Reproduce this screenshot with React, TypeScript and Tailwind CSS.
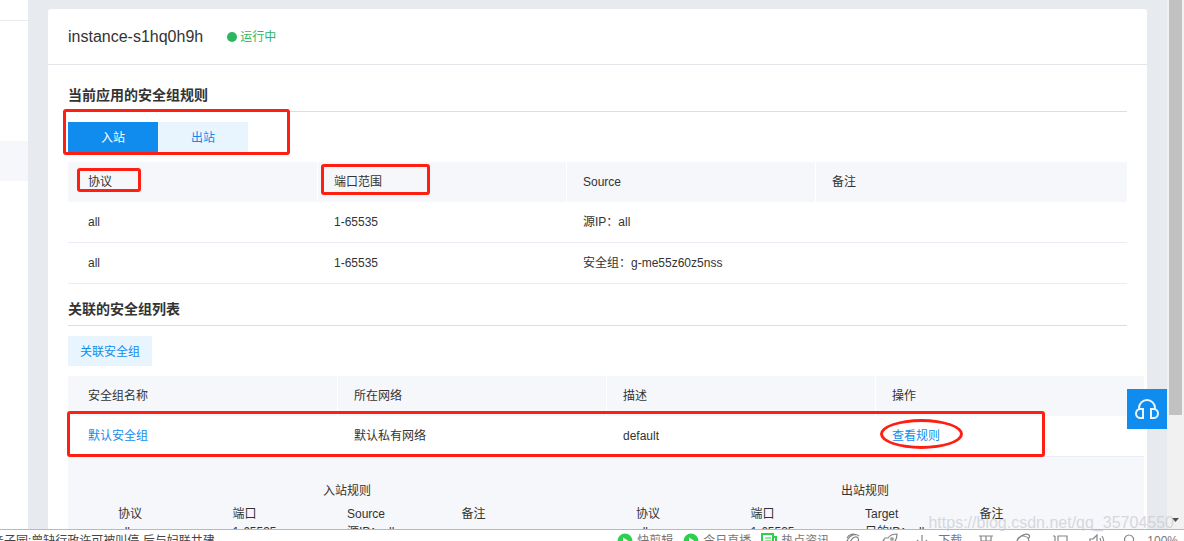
import React from "react";

interface Rule {
  protocol: string;
  port: string;
  peer: string;
  remark: string;
}

const inboundRules: Rule[] = [
  { protocol: "all", port: "1-65535", peer: "源IP：all", remark: "" },
  { protocol: "all", port: "1-65535", peer: "安全组：g-me55z60z5nss", remark: "" },
];

const outboundRules: Rule[] = [
  { protocol: "all", port: "1-65535", peer: "目的IP：all", remark: "" },
];

const SectionTitle: React.FC<{ children: React.ReactNode }> = ({ children }) => (
  <h2 className="flex h-8 items-center border-b border-[#dcdde0] pb-0.5 text-sm font-bold text-[#333]">
    {children}
  </h2>
);

// Applied rules table with the inbound / outbound switch
const AppliedRules = () => (
  <section>
    <SectionTitle>当前应用的安全组规则</SectionTitle>
    <div className="mt-[10px] flex">
      <button type="button" className="h-[30px] w-[90px] bg-[#108cee] pt-0.5 text-white">
        入站
      </button>
      <button type="button" className="h-[30px] w-[90px] bg-[#e8f5fe] pt-0.5 text-[#108cee]">
        出站
      </button>
    </div>
    <table className="mt-[10px] w-full table-fixed border-separate border-spacing-0 text-left">
      <thead>
        <tr className="h-10 bg-[#f5f7fb]">
          <th className="w-[250px] border-r border-white p-0 pl-5 font-normal">协议</th>
          <th className="w-[249px] border-r border-white p-0 pl-4 font-normal">端口范围</th>
          <th className="w-[249px] border-r border-white p-0 pl-4 font-normal">Source</th>
          <th className="p-0 pl-4 font-normal">备注</th>
        </tr>
      </thead>
      <tbody>
        {inboundRules.map((rule) => (
          <tr key={rule.peer} className="h-[41px]">
            <td className="border-b border-[#eaebf5] p-0 pl-5">{rule.protocol}</td>
            <td className="border-b border-[#eaebf5] p-0 pl-4">{rule.port}</td>
            <td className="border-b border-[#eaebf5] p-0 pl-4">{rule.peer}</td>
            <td className="border-b border-[#eaebf5] p-0 pl-4">{rule.remark}</td>
          </tr>
        ))}
      </tbody>
    </table>
  </section>
);

interface RuleDetailProps {
  title: string;
  peerLabel: string;
  rules: Rule[];
}

const RuleDetail: React.FC<RuleDetailProps> = ({ title, peerLabel, rules }) => (
  <div className="flex-1">
    <h3 className="mb-1 h-[18px] text-center">{title}</h3>
    <table className="ml-[30px] w-[458px] table-fixed text-left">
      <thead>
        <tr className="h-[18px]">
          <th className="p-0 font-normal">协议</th>
          <th className="p-0 font-normal">端口</th>
          <th className="p-0 font-normal">{peerLabel}</th>
          <th className="p-0 font-normal">备注</th>
        </tr>
      </thead>
      <tbody>
        {rules.map((rule) => (
          <tr key={rule.peer} className="h-[18px]">
            <td className="p-0">{rule.protocol}</td>
            <td className="p-0">{rule.port}</td>
            <td className="whitespace-nowrap p-0">{rule.peer}</td>
            <td className="p-0">{rule.remark}</td>
          </tr>
        ))}
      </tbody>
    </table>
  </div>
);

// Groups bound to the instance, first row expanded
const GroupList = () => (
  <section className="mt-[10px]">
    <SectionTitle>关联的安全组列表</SectionTitle>
    <button type="button" className="mt-[10px] block h-[30px] bg-[#e8f5fe] px-3 pt-0.5 text-[#108cee]">
      关联安全组
    </button>
    <div className="-mr-[17px] mt-[10px]">
      <table className="w-full table-fixed border-separate border-spacing-0 text-left">
        <thead>
          <tr className="h-10 bg-[#f5f7fb]">
            <th className="w-[270px] border-r border-white p-0 pl-5 font-normal">安全组名称</th>
            <th className="w-[269px] border-r border-white p-0 pl-4 font-normal">所在网络</th>
            <th className="w-[269px] border-r border-white p-0 pl-4 font-normal">描述</th>
            <th className="p-0 pl-4 font-normal">操作</th>
          </tr>
        </thead>
        <tbody>
          <tr className="h-[41px]">
            <td className="border-b border-[#eaebf5] p-0 pl-5">
              <a href="#group" className="text-[#108cee]">默认安全组</a>
            </td>
            <td className="border-b border-[#eaebf5] p-0 pl-4">默认私有网络</td>
            <td className="border-b border-[#eaebf5] p-0 pl-4">default</td>
            <td className="border-b border-[#eaebf5] p-0 pl-4">
              <a href="#rules" className="text-[#108cee]">查看规则</a>
            </td>
          </tr>
          <tr className="bg-[#f5f7fb]">
            <td colSpan={4} className="px-5 pb-6 pt-[26px]">
              <div className="flex">
                <RuleDetail title="入站规则" peerLabel="Source" rules={inboundRules} />
                <RuleDetail title="出站规则" peerLabel="Target" rules={outboundRules} />
              </div>
            </td>
          </tr>
        </tbody>
      </table>
    </div>
  </section>
);

// Red marks drawn over the page
const Marks = () => (
  <div className="pointer-events-none">
    <div className="absolute left-[63px] top-[109px] h-[46px] w-[227px] rounded-[3px] border-3 border-[#ff1e12]" />
    <div className="absolute left-[77px] top-[168px] h-6 w-16 rounded-[3px] border-3 border-[#ff1e12]" />
    <div className="absolute left-[321px] top-[164px] h-[31px] w-[109px] rounded-[3px] border-3 border-[#ff1e12]" />
    <div className="absolute left-[67px] top-[411px] h-[46px] w-[978px] rounded-[3px] border-3 border-[#ff1e12]" />
    <div className="absolute left-[880px] top-[419px] h-[30px] w-[83px] rounded-[50%] border-3 border-[#ff1e12]" />
  </div>
);

const ScrollBar = () => (
  <div className="flex w-[17px] shrink-0 flex-col items-center justify-between bg-[#f1f1f1] pb-1">
    <div className="h-[415px] w-[13px] bg-[#c1c1c1]" />
    <svg width="7" height="9" viewBox="0 0 7 9" fill="#505050">
      <path d="M0 2h7L3.500 6z" />
    </svg>
  </div>
);

const PlayIcon = () => (
  <svg width="16" height="16" viewBox="0 0 16 16">
    <circle cx="8" cy="8" r="7.500" fill="#2bd14b" />
    <path d="M6 4.500v7L11.500 8z" fill="#fff" />
  </svg>
);

const NewsIcon = () => (
  <svg width="16" height="16" viewBox="0 0 16 16" fill="none" stroke="#2bd14b" strokeWidth="2">
    <path d="M1 1h11v14H1z M12 4h3v11h-3" />
    <path d="M4 5h6 M4 8h6 M4 11h4" strokeWidth="1.200" />
  </svg>
);

// Outline icons of the browser's bottom bar
const BarIcon: React.FC<{ d: string }> = ({ d }) => (
  <svg width="16" height="16" viewBox="0 0 16 16" fill="none" stroke="#858585" strokeWidth="1.200">
    <path d={d} />
  </svg>
);

const StatusBar = () => (
  <footer className="h-[11px] shrink-0 overflow-hidden bg-white">
    <div className="flex h-[22px] items-center justify-between whitespace-nowrap text-[#777]">
      <span className="-ml-2 text-[#444]">亲子园:曾缺行政许可被叫停 后与妇联共建</span>
      <div className="flex items-center pr-[6px]">
        <span className="mr-[10px] flex items-center gap-1">
          <PlayIcon />
          快剪辑
        </span>
        <span className="mr-[10px] flex items-center gap-1">
          <PlayIcon />
          今日直播
        </span>
        <span className="mr-4 flex items-center gap-1">
          <NewsIcon />
          热点资讯
        </span>
        <div className="mr-4 flex items-center gap-[21px]">
          <BarIcon d="M14 3C11 0 5 2 3 6s-2 7 1 8 8-2 9-5 0-6-3-5-5 4-4 6M2 5a6.500 6.500 0 0 1 9-3" />
          <BarIcon d="M15 1c-4 0-7 1-9 4L3 5 1 8l3 1 3 3 1 3 3-2v-3c3-2 4-5 4-9zM9 5h2v2H9z" />
        </div>
        <span className="mr-4 flex items-center gap-2">
          <BarIcon d="M8 2v10M3 7l5 5 5-5M1 15h14" />
          下载
        </span>
        <div className="mr-4 flex items-center gap-[21px]">
          <BarIcon d="M1 3h14M3 3v10h10V3M8 3v6M3 8h10" />
          <BarIcon d="M2 9h12C14 5 11 3 8 3S2 5 2 9s3 6 6 6c3 0 5-1 6-3M2 9C2 5 10-1 14 2c1 1 0 3-1 4" />
          <BarIcon d="M6 3h9v11H6zM3 3v6M1 3h2" />
          <BarIcon d="M1 6h3l4-4v12l-4-4H1zM11 5c1 2 1 4 0 6M13 3c2 3 2 7 0 10" />
        </div>
        <BarIcon d="M8 2a4.500 4.500 0 1 0 .1 0M11 10l4 4" />
        <span className="ml-[10px]">100%</span>
      </div>
    </div>
  </footer>
);

const App = () => {
  return (
    <div className="relative flex h-screen flex-col overflow-hidden bg-white font-['Liberation_Sans','Noto_Sans_CJK_SC',sans-serif] text-xs text-[#333]">
      <div className="relative flex min-h-0 flex-1 overflow-hidden border-b border-[#b8b9bd] bg-[#e7eaef]">
        <aside className="w-7 shrink-0 bg-white">
          <div className="h-[21px] border-b border-[#e7eaef]" />
          <div className="mt-[120px] h-10 bg-[#f5f7fb]" />
        </aside>

        <main className="min-w-0 flex-1 px-5 pt-[9px]">
          <div className="rounded-t-[3px] bg-white">
            <header className="flex h-14 items-center border-b border-[#e2e6eb] px-5">
              <h1 className="text-base">instance-s1hq0h9h</h1>
              <span className="ml-6 flex items-center gap-[3px] text-[#2db660]">
                <span className="size-[10px] rounded-full bg-[#2db660]" />
                运行中
              </span>
            </header>
            <div className="px-5 pt-[15px]">
              <AppliedRules />
              <GroupList />
            </div>
          </div>
        </main>

        <ScrollBar />
        <Marks />

        <button
          type="button"
          aria-label="support"
          className="absolute right-[17px] top-[389px] flex size-10 items-center justify-center bg-[#108cee]"
        >
          <svg width="24" height="20" viewBox="0 0 24 20" fill="none" stroke="#e8f5fe" strokeWidth="2">
            <path d="M4 10V9a8 8 0 0 1 16 0v1" />
            <path d="M8 10v9H5.500C3 19 1 17 1 14.500S3 10 5.500 10z" />
            <path d="M16 10v9h2.500c2.500 0 4.500-2 4.500-4.500S21 10 18.500 10z" />
          </svg>
        </button>
      </div>
      <StatusBar />
      <span className="pointer-events-none absolute bottom-[6px] right-[10px] text-base text-[#c8c9cc]/70">
        https://blog.csdn.net/qq_35704550
      </span>
    </div>
  );
};

export default App;
